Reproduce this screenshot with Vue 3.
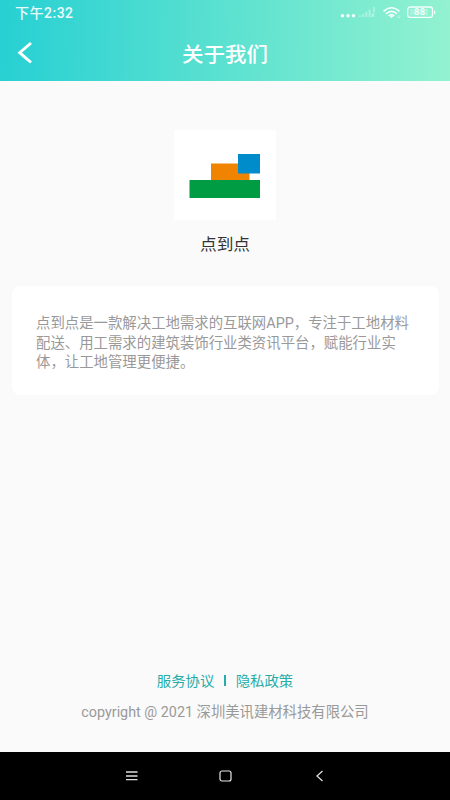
<script setup>
const lines = [
  '点到点是一款解决工地需求的互联网APP，专注于工地材料',
  '配送、用工需求的建筑装饰行业类资讯平台，赋能行业实',
  '体，让工地管理更便捷。',
]
</script>

<template>
  <div class="page">
    <header class="header">
      <div class="status">
        <span class="time">下午2:32</span>
        <svg class="indicators" width="98" height="16" viewBox="0 0 98 16">
          <g fill="#fff">
            <g opacity=".9"><circle cx="2.500" cy="11.700" r="1.800" /><circle cx="8" cy="11.700" r="1.800" /><circle cx="13.500" cy="11.700" r="1.800" /></g>
            <g opacity=".35">
              <rect x="19" y="11.300" width="2" height="1.700" /><rect x="22.200" y="9.800" width="2" height="3.200" />
              <rect x="25.400" y="7.800" width="2" height="5.200" /><rect x="28.600" y="5.500" width="2" height="7.500" />
              <rect x="33" y="3" width="1.800" height="5.500" />
            </g>
          </g>
          <path d="M31 9.500l3.600 3.600M34.600 9.500l-3.600 3.600" stroke="#fff" stroke-width="1" opacity=".6" />
          <g fill="none" stroke="#fff" stroke-width="1.500" opacity=".92">
            <path d="M43.500 7.400Q51.500 0 59.500 7.400" /><path d="M46 9.900Q51.500 4.900 57 9.900" /><path d="M48.600 12Q51.500 9.300 54.400 12" />
          </g>
          <path d="M49.700 12.300Q51.500 10.800 53.300 12.300L51.500 14z" fill="#fff" />
          <path d="M59 11v3M57.700 12.600l1.300 1.300 1.300-1.300" stroke="#fff" stroke-width=".8" fill="none" opacity=".45" />
          <rect x="67.700" y="3" width="24.800" height="10.400" rx="2.600" fill="none" stroke="#fff" stroke-width="1.300" opacity=".9" />
          <rect x="70" y="5" width="18" height="6.400" fill="#fff" opacity=".25" />
          <rect x="94" y="6.800" width="1.300" height="3" fill="#fff" opacity=".9" />
          <text x="80" y="11.300" text-anchor="middle" class="level">88</text>
        </svg>
      </div>
      <div class="nav">
        <svg class="back" width="16" height="24" viewBox="0 0 16 24">
          <path d="M14 2L2.700 11.700 14 21.500" fill="none" stroke="#fff" stroke-width="2.900" />
        </svg>
        <h1 class="title squash">关于我们</h1>
      </div>
    </header>

    <main class="content">
      <svg class="logo" width="102" height="90" viewBox="0 0 102 90">
        <rect width="102" height="90" fill="#fff" />
        <rect x="37" y="33.500" width="38.500" height="17" fill="#f08300" />
        <rect x="15.500" y="50" width="70.500" height="18" fill="#009c43" />
        <rect x="64" y="24" width="22" height="19.500" fill="#008ccb" />
      </svg>
      <div class="name squash">点到点</div>
      <section class="card">
        <p v-for="line in lines" :key="line" class="line">{{ line }}</p>
      </section>
    </main>

    <footer class="footer">
      <div class="links">
        <a class="squash">服务协议</a><i class="divider"></i><a class="squash">隐私政策</a>
      </div>
      <div class="copyright">copyright @ 2021 深圳美讯建材科技有限公司</div>
    </footer>

    <nav class="system">
      <svg width="14" height="12" viewBox="0 0 14 12"><path d="M2 2h11.500M2 6h11.500M2 9.700h11.500" stroke="#ddd" stroke-width="1.300" /></svg>
      <svg width="14" height="12" viewBox="0 0 14 12"><rect x="2" y="1" width="11" height="10" rx="2" fill="none" stroke="#e8e8e8" stroke-width="1.200" /></svg>
      <svg width="14" height="12" viewBox="0 0 14 12"><path d="M10.500 1L5 6l5.500 5" fill="none" stroke="#ddd" stroke-width="1.300" /></svg>
    </nav>
  </div>
</template>

<style>
body { margin: 0; }
</style>

<style scoped>
.page {
  width: 450px;
  height: 800px;
  display: flex;
  flex-direction: column;
  background: #fafafa;
  font-family: Roboto, "Noto Sans CJK SC", sans-serif;
  overflow: hidden;
}
.squash { display: block; transform: scaleY(.94); white-space: nowrap; }
.header {
  height: 81px;
  flex: none;
  background: linear-gradient(91deg, #27d0d3 0%, #5be1d0 50%, #93f2d0 100%);
}
.status {
  height: 26px;
  padding: 0 12px 0 15px;
  display: flex;
  justify-content: space-between;
}
.indicators { margin-top: 4px; }
.time { color: #fff; font-size: 14px; line-height: 27px; font-weight: 500; letter-spacing: .5px; opacity: .9; }
.level { fill: #fff; font: 500 8.500px Roboto, sans-serif; letter-spacing: .8px; }
.nav {
  height: 55px;
  display: grid;
  grid-template-columns: 48px 1fr 48px;
}
.back { margin: 15px 0 0 17px; }
.title { margin: 0; color: #fff; font-size: 21.500px; line-height: 57px; font-weight: 500; text-align: center; }
.content {
  flex: 1;
  display: flex;
  flex-direction: column;
  align-items: center;
  padding: 49px 12px 0;
}
.logo { flex: none; }
.name { margin-top: 13px; font-size: 16.700px; line-height: 24px; color: #333; }
.card {
  box-sizing: border-box;
  width: 427px;
  height: 109px;
  margin-top: 29px;
  padding: 28px 24px 0 24.500px;
  border-radius: 9px / 8px;
  background: #fff;
}
.line { margin: 0; font-size: 14.400px; line-height: 19.600px; color: #999; white-space: nowrap; }
.footer { height: 81px; flex: none; text-align: center; }
.links {
  display: flex;
  justify-content: center;
  align-items: center;
  height: 17px;
  color: #26aca9;
  font-size: 14.400px;
}
.divider { width: 1.300px; height: 11px; margin: 1px 10px 0; background: #26aca9; }
.copyright { margin-top: 15px; line-height: 20px; font-size: 14.350px; color: #999; }
.system {
  height: 48px;
  flex: none;
  display: flex;
  justify-content: center;
  align-items: center;
  gap: 80px;
  background: #000;
}
</style>
